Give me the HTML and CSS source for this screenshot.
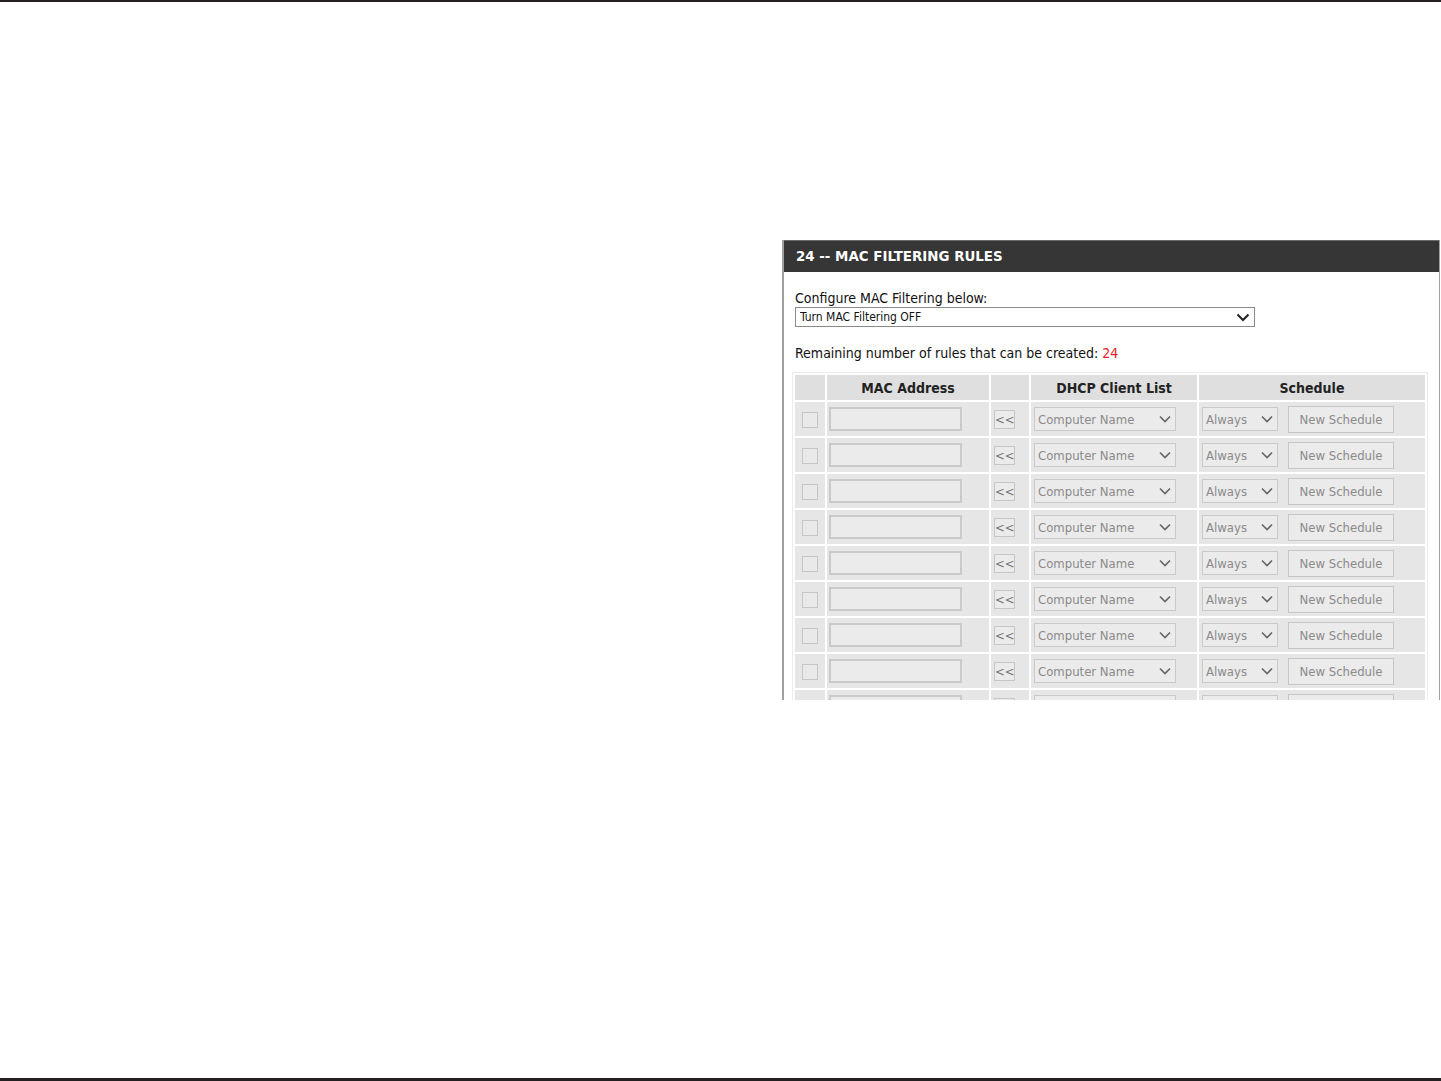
FILE: index.html
```html
<!DOCTYPE html>
<html>

<head lang="en">
    <meta charset="UTF-8">
    <title>MAC Filtering</title>
    <link rel="stylesheet" href="styles.css">
</head>

<body>
    <div class="page">
        <div class="content">
            <div class="panel">
                <div class="panel-title">24 -- MAC FILTERING RULES</div>
                <div class="panel-body">
                    <div class="config-label">Configure MAC Filtering below:</div>
                    <div class="select-wrap main-select">
                        <select class="mode-select">
                            <option>Turn MAC Filtering OFF</option>
                        </select>
                        <svg class="chevron" width="14" height="9" viewBox="0 0 14 9"><path d="M1.5 1.5 L7 7 L12.5 1.5" fill="none" stroke="#222" stroke-width="2"/></svg>
                    </div>
                    <div class="remaining">Remaining number of rules that can be created: <span class="count">24</span></div>

                    <table class="rules" cellspacing="2">
                        <thead>
                            <tr>
                                <th class="c-check"></th>
                                <th class="c-mac">MAC Address</th>
                                <th class="c-copy"></th>
                                <th class="c-dhcp">DHCP Client List</th>
                                <th class="c-sched">Schedule</th>
                            </tr>
                        </thead>
                        <tbody id="rows"></tbody>
                    </table>
                </div>
            </div>
        </div>
    </div>
    <script>
        // 生成规则行
        var rows = document.querySelector('#rows');
        var chev = '<svg class="chevron" width="12" height="8" viewBox="0 0 12 8"><path d="M1 1.5 L6 6.5 L11 1.5" fill="none" stroke="#666" stroke-width="1.6"/></svg>';
        var html = '';
        for (var i = 0; i < 10; i++) {
            html += '<tr>' +
                '<td class="c-check"><input type="checkbox" class="rule-check" disabled></td>' +
                '<td class="c-mac"><input type="text" class="mac-input" disabled></td>' +
                '<td class="c-copy"><button class="copy-btn" disabled>&lt;&lt;</button></td>' +
                '<td class="c-dhcp"><span class="select-wrap"><select class="row-select name-select" disabled><option>Computer Name</option></select>' + chev + '</span></td>' +
                '<td class="c-sched"><span class="select-wrap"><select class="row-select always-select" disabled><option>Always</option></select>' + chev + '</span>' +
                '<button class="sched-btn" disabled>New Schedule</button></td>' +
                '</tr>';
        }
        rows.innerHTML = html;
    </script>
</body>

</html>
```

FILE: styles.css
```css
* {
    padding: 0px;
    margin: 0px;
}

body {
    background: #ffffff;
    font-family: "DejaVu Sans Condensed", "DejaVu Sans", "Liberation Sans", sans-serif;
    color: #111111;
}

.page {
    height: 1081px;
    box-sizing: border-box;
    border-top: 2px solid #231f20;
    border-bottom: 3px solid #231f20;
    display: flex;
    flex-direction: column;
}

.content {
    flex: 1;
    padding: 238px 1px 0px 782px;
}

/* 面板 */
.panel {
    width: 658px;
    height: 460px;
    overflow: hidden;
    box-sizing: border-box;
    border-left: 2px solid #a0a0a0;
    border-right: 1px solid #a0a0a0;
    background: #ffffff;
}

.panel-title {
    height: 31px;
    line-height: 31px;
    background: #363636;
    border-top: 1px solid #6a6a6a;
    color: #ffffff;
    font-family: "DejaVu Sans", "Liberation Sans", sans-serif;
    font-size: 13.4px;
    font-weight: bold;
    padding-left: 14px;
    margin-left: -2px;
}

.panel-body {
    padding: 18px 10px 0px 8px;
}

.config-label {
    font-size: 14px;
    line-height: 16px;
    margin-left: 3px;
}

.select-wrap {
    position: relative;
    display: inline-block;
}

.main-select {
    display: block;
    width: 460px;
    margin-left: 3px;
}

.mode-select {
    appearance: none;
    -webkit-appearance: none;
    width: 460px;
    height: 20px;
    border: 1px solid #8a8a8a;
    background: #ffffff;
    font-family: inherit;
    font-size: 12px;
    color: #111111;
    padding-left: 4px;
}

.chevron {
    position: absolute;
    right: 7px;
    top: 50%;
    margin-top: -4px;
}

.remaining {
    font-size: 14px;
    line-height: 16px;
    margin: 18px 0px 0px 3px;
}

.count {
    color: #e8202a;
}

/* 规则表 */
.rules {
    margin-top: 11px;
    border: 1px solid #ececec;
    background: #ffffff;
    width: 636px;
    table-layout: fixed;
}

.rules th,
.rules td {
    box-sizing: border-box;
}

.rules th {
    height: 25px;
    line-height: 20px;
    background: #dfdfdf;
    font-size: 14px;
    font-weight: bold;
    color: #222222;
}

.rules td {
    height: 34px;
    background: #e6e6e6;
    padding-left: 2px;
    white-space: nowrap;
}

.c-check {
    width: 30px;
}

.c-mac {
    width: 162px;
}

.c-copy {
    width: 38px;
}

.c-dhcp {
    width: 166px;
}

.c-sched {
    width: 226px;
}

.rules td.c-check {
    padding-left: 0px;
    text-align: center;
}

.rules td.c-copy,
.rules td.c-dhcp,
.rules td.c-sched {
    padding-left: 3px;
}

.rule-check {
    appearance: none;
    -webkit-appearance: none;
    width: 16px;
    height: 16px;
    border: 1px solid #c6c6c6;
    background: #e9e9e9;
    vertical-align: middle;
}

.mac-input {
    width: 133px;
    height: 24px;
    box-sizing: border-box;
    border: 2px solid #cacaca;
    background: #ebebeb;
    vertical-align: middle;
}

.copy-btn {
    width: 21px;
    height: 19px;
    border: 1px solid #c6c6c6;
    background: #ebebeb;
    color: #777777;
    font-family: inherit;
    font-size: 13px;
    line-height: 15px;
    vertical-align: middle;
}

.row-select {
    appearance: none;
    -webkit-appearance: none;
    height: 24px;
    border: 1px solid #cacaca;
    background: #ebebeb;
    color: #8a8a8a;
    font-family: inherit;
    font-size: 13px;
    padding-left: 3px;
    vertical-align: middle;
    opacity: 1;
}

.name-select {
    width: 142px;
}

.always-select {
    width: 76px;
}

.select-wrap .chevron {
    right: 5px;
}

.sched-btn {
    margin-left: 10px;
    width: 106px;
    height: 27px;
    border: 1px solid #c6c6c6;
    background: #ebebeb;
    color: #8a8a8a;
    font-family: inherit;
    font-size: 13px;
    vertical-align: middle;
}
```
